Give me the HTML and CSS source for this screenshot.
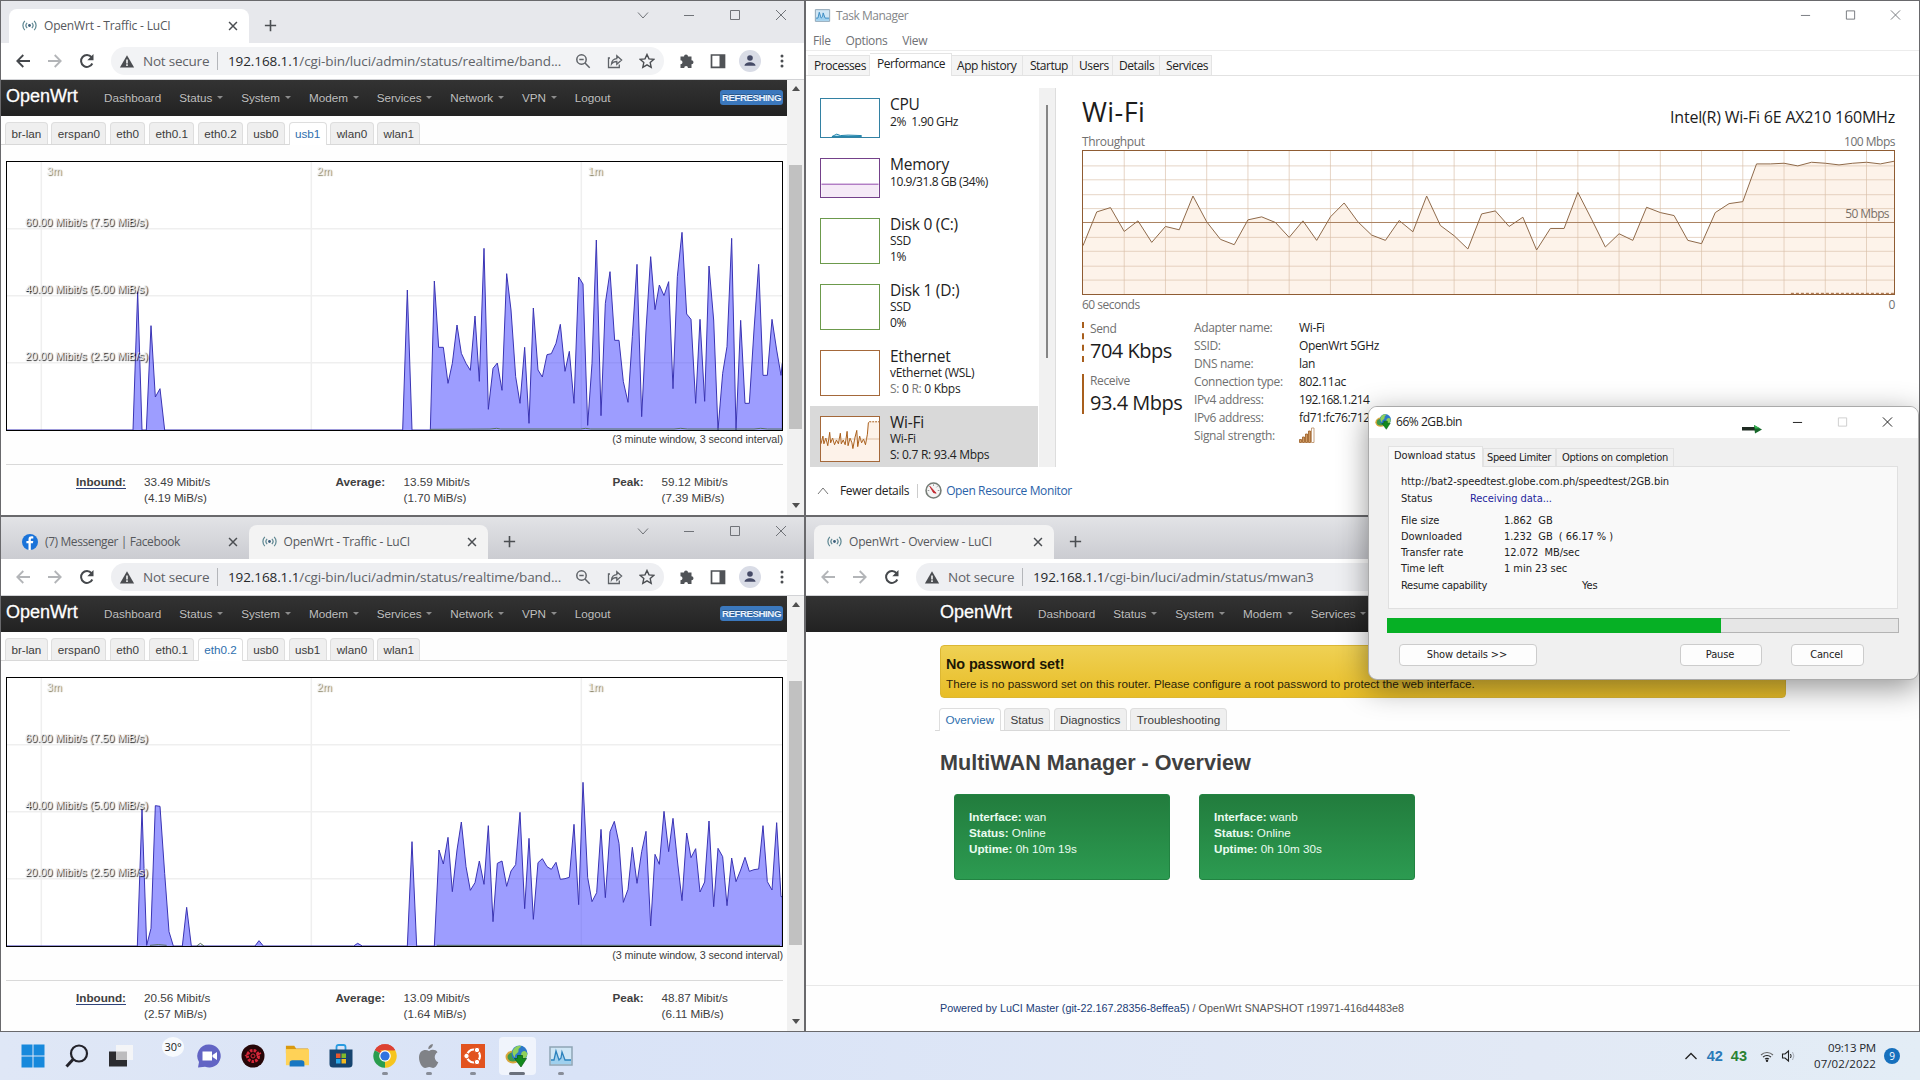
FILE: index.html
```html
<!DOCTYPE html>
<html lang="en">
<head>
<meta charset="utf-8">
<title>Desktop</title>
<link rel="stylesheet" href="styles.css">
</head>
<body>
<svg class="defs" width="0" height="0" aria-hidden="true">
  <symbol id="i-signal" viewBox="0 0 16 16"><g fill="none" stroke="#5e8792" stroke-width="1.3"><path d="M5.5 5.2a4 4 0 0 0 0 5.6M10.5 5.2a4 4 0 0 1 0 5.6M3 3a7.2 7.2 0 0 0 0 10M13 3a7.2 7.2 0 0 1 0 10"/></g><circle cx="8" cy="8" r="1.5" fill="#3c5d7a"/></symbol>
  <symbol id="i-x" viewBox="0 0 16 16"><path d="M3.5 3.5l9 9M12.5 3.5l-9 9" fill="none" stroke="currentColor" stroke-width="1.7"/></symbol>
  <symbol id="i-plus" viewBox="0 0 16 16"><path d="M8 2v12M2 8h12" fill="none" stroke="currentColor" stroke-width="1.7"/></symbol>
  <symbol id="i-back" viewBox="0 0 16 16"><path d="M15 8H2.5M8.3 2L2.3 8l6 6" fill="none" stroke="currentColor" stroke-width="1.8"/></symbol>
  <symbol id="i-fwd" viewBox="0 0 16 16"><path d="M1 8h12.500M7.700 2l6 6-6 6" fill="none" stroke="currentColor" stroke-width="1.8"/></symbol>
  <symbol id="i-reload" viewBox="0 0 16 16"><path d="M13.300 10.500A5.900 5.900 0 1 1 12.500 4.200" fill="none" stroke="currentColor" stroke-width="2"/><path d="M14.500 1v6.200H8.300z" fill="currentColor"/></symbol>
  <symbol id="i-warn" viewBox="0 0 16 16"><path d="M8 1.200L15.600 14.500H.4z" fill="#4b4d51"/><path d="M7.200 5.800h1.600v4.200H7.200zM7.200 11h1.600v1.700H7.200z" fill="#fff"/></symbol>
  <symbol id="i-zoom" viewBox="0 0 16 16"><g fill="none" stroke="#5f6368" stroke-width="1.500"><circle cx="6.500" cy="6.500" r="4.700"/><path d="M10 10l4.700 4.700M4.300 6.500h4.400"/></g></symbol>
  <symbol id="i-share" viewBox="0 0 16 16"><g fill="none" stroke="#5f6368" stroke-width="1.300"><path d="M3 5H1.500v9.500h10.800V11.500"/><path d="M4.500 11c.3-3.700 2.300-5.200 5.300-5.400V2.800l4.800 4.300-4.800 4.200V8.500c-2.200 0-4 .6-5.300 2.500z"/></g></symbol>
  <symbol id="i-star" viewBox="0 0 16 16"><path d="M8 1.500l2 4.400 4.700.5-3.500 3.200 1 4.700L8 11.900l-4.200 2.400 1-4.700L1.300 6.400 6 5.900z" fill="none" stroke="#4a4d51" stroke-width="1.400"/></symbol>
  <symbol id="i-puzzle" viewBox="0 0 16 16"><path d="M5 3.400a2 2 0 0 1 4 0h3.500v3.900a2 2 0 0 1 0 4V15H9a1.900 1.900 0 0 0-3.800 0H1.500v-3.700a2 2 0 0 0 0-4V3.400z" fill="#505357"/></symbol>
  <symbol id="i-panel" viewBox="0 0 16 16"><path d="M1.500 2h13v12.300h-13z" fill="none" stroke="#505357" stroke-width="1.700"/><path d="M9.500 2h5v12h-5z" fill="#505357"/></symbol>
  <symbol id="i-user" viewBox="0 0 22 22"><circle cx="11" cy="11" r="11" fill="#d9dce6"/><circle cx="11" cy="8" r="2.800" fill="#454a66"/><path d="M5.500 15.800c0-4.800 11-4.800 11 0z" fill="#454a66"/></symbol>
  <symbol id="i-dots" viewBox="0 0 4 16"><g fill="#4a4d51"><circle cx="2" cy="3" r="1.500"/><circle cx="2" cy="8" r="1.500"/><circle cx="2" cy="13" r="1.500"/></g></symbol>
  <symbol id="i-down" viewBox="0 0 12 12"><path d="M1 3.500l5 5.500 5-5.500" fill="none" stroke="currentColor"/></symbol>
  <symbol id="i-min" viewBox="0 0 12 12"><path d="M1 6.500h10" fill="none" stroke="currentColor"/></symbol>
  <symbol id="i-max" viewBox="0 0 12 12"><path d="M1.500 1.500h9v9h-9z" fill="none" stroke="currentColor"/></symbol>
  <symbol id="i-close" viewBox="0 0 12 12"><path d="M1 1l10 10M11 1L1 11" fill="none" stroke="currentColor"/></symbol>
  <symbol id="i-tm" viewBox="0 0 24 20"><path d="M1 1h22v18H1z" fill="#cfe6f5" stroke="#8fa5b5" stroke-width="1.500"/><path d="M2 18v-4h3l2-9 3 9 2-2 1-6 3 8h6v4z" fill="#9fd0ee"/><path d="M2 14h3l2-9 3 9 2-2 1-6 3 8h6" fill="none" stroke="#2d83bd" stroke-width="1.300"/></symbol>
  <symbol id="i-idm" viewBox="0 0 24 24"><ellipse cx="8" cy="13" rx="7.500" ry="6.500" fill="#d9a73a"/><ellipse cx="8" cy="13" rx="5.500" ry="4.500" fill="#3f9a4a"/><circle cx="14.500" cy="9.500" r="8" fill="#2c78c8"/><path d="M8 6c3-5 8-4.500 8-3.500s-3 1.500-2.500 4-4 3.500-3.500 6S6 9.500 8 6zM17 8c2-2 4-1 5 1s-1 5-3 6-4-5-2-7z" fill="#8fd15a"/><path d="M9.500 14.500h3v-3h5v3h4l-5.500 8.500z" fill="#128a1d" stroke="#075c10" stroke-width=".7"/></symbol>
</svg>

<div class="desktop">

<section class="window">
  <div class="tabstrip">
    <div class="tab active"><svg class="fav"><use href="#i-signal"/></svg><span class="tab-title">OpenWrt - Traffic - LuCI</span><svg class="tab-x"><use href="#i-x"/></svg></div>
    <svg class="plus"><use href="#i-plus"/></svg>
    <div class="winctl"><svg><use href="#i-down"/></svg><svg><use href="#i-min"/></svg><svg><use href="#i-max"/></svg><svg><use href="#i-close"/></svg></div>
  </div>
  <div class="toolbar">
    <svg class="nav-ico"><use href="#i-back"/></svg><svg class="nav-ico off"><use href="#i-fwd"/></svg><svg class="nav-ico"><use href="#i-reload"/></svg>
    <div class="omnibox"><svg class="warn"><use href="#i-warn"/></svg><span class="notsecure">Not secure</span><i class="sep"></i><span class="url"><b>192.168.1.1</b>/cgi-bin/luci/admin/status/realtime/band...</span><span class="omni-icons"><svg><use href="#i-zoom"/></svg><svg><use href="#i-share"/></svg><svg><use href="#i-star"/></svg></span></div>
    <div class="ext"><svg><use href="#i-puzzle"/></svg><svg><use href="#i-panel"/></svg><svg class="user"><use href="#i-user"/></svg><svg class="dots"><use href="#i-dots"/></svg></div>
  </div>
  <div class="viewport">
    <div class="page">
      <nav class="navbar"><span class="brand">OpenWrt</span><span class="item">Dashboard</span><span class="item drop">Status</span><span class="item drop">System</span><span class="item drop">Modem</span><span class="item drop">Services</span><span class="item drop">Network</span><span class="item drop">VPN</span><span class="item">Logout</span><span class="refresh">REFRESHING</span></nav>
      <div class="subtabs"><span>br-lan</span><span>erspan0</span><span>eth0</span><span>eth0.1</span><span>eth0.2</span><span>usb0</span><span class="on">usb1</span><span>wlan0</span><span>wlan1</span></div>
      <svg class="traffic" viewBox="21 36 2325 804" preserveAspectRatio="none">
        <path class="grid" d="M124 36V840M934 36V840M1744 36V840M21 236H2346M21 437H2346M21 638H2346"/>
        <polyline class="area" points="21,840 399,840 413,425 426,840 439,840 453,527 466,741 480,716 494,840 840,840"/>
        <polyline class="area" transform="translate(1200)" points="-360,840 8,840 22,420 36,840 91,840 103,393 116,592 130,592 144,700 157,640 171,525 184,610 198,640 211,661 225,498 238,694 252,295 265,778 279,655 292,639 306,721 320,371 333,480 347,680 360,760 374,592 387,820 400,474 414,660 427,681 441,614 454,611 468,580 481,523 495,664 508,604 522,760 536,381 549,402 563,826 576,640 589,270 603,797 616,460 630,365 644,571 657,571 670,695 684,757 697,560 711,343 725,800 738,540 752,320 765,479 778,405 792,437 806,395 819,716 832,380 846,247 860,492 873,508 887,760 900,508 914,754 927,348 941,510 954,840 968,670 981,590 995,265 1008,840 1022,511 1035,760 1048,760 1062,540 1076,343 1089,676 1102,676 1116,508 1130,600 1143,676 1147,640 1147,840"/>
        <path class="out" d="M1290 838l180-1 20-2 12 2 240 0 15-2 15 2 250 0 20-2 20 2h200l20-2 20 2h60"/>
        <g class="lbl time"><text x="140" y="75">3m</text><text x="950" y="75">2m</text><text x="1763" y="75">1m</text></g>
        <g class="lbl"><text x="76" y="228">60.00 Mibit/s (7.50 MiB/s)</text><text x="76" y="429">40.00 Mibit/s (5.00 MiB/s)</text><text x="76" y="630">20.00 Mibit/s (2.50 MiB/s)</text></g>
      </svg>
      <div class="interval">(3 minute window, 3 second interval)</div>
      <div class="stats"><b><u>Inbound:</u></b><span>33.49 Mibit/s<br>(4.19 MiB/s)</span><b>Average:</b><span>13.59 Mibit/s<br>(1.70 MiB/s)</span><b>Peak:</b><span>59.12 Mibit/s<br>(7.39 MiB/s)</span></div>
    </div>
    <div class="scrollbar"><i class="up"></i><i class="thumb"></i><i class="dn"></i></div>
  </div>
</section>

<section class="window taskmgr">
  <div class="tm-title"><svg class="tm-ico"><use href="#i-tm"/></svg><span class="name">Task Manager</span><div class="winctl"><svg><use href="#i-min"/></svg><svg><use href="#i-max"/></svg><svg><use href="#i-close"/></svg></div></div>
  <div class="tm-menu"><span>File</span><span>Options</span><span>View</span></div>
  <div class="tm-tabs"><span>Processes</span><span class="on">Performance</span><span>App history</span><span>Startup</span><span>Users</span><span>Details</span><span>Services</span></div>
  <div class="tm-body">
    <div class="tm-list">
      <div class="res s"><svg class="thumb cpu" viewBox="0 0 60 40"><path d="M11 39.500l5-2.500 4 1.500 8-.5 14 .5v1z" fill="#b7dcec" stroke="#1a7fa8" stroke-width="1"/></svg><div><h4>CPU</h4><p>2%&nbsp; 1.90 GHz</p></div></div>
      <div class="res s"><svg class="thumb mem" viewBox="0 0 60 40"><path d="M0 26.500h60V40H0z" fill="#f5eaf7"/><path d="M0 26.500h60" stroke="#8b3fa8"/></svg><div><h4>Memory</h4><p>10.9/31.8 GB (34%)</p></div></div>
      <div class="res"><svg class="thumb disk"></svg><div><h4>Disk 0 (C:)</h4><p>SSD</p><p>1%</p></div></div>
      <div class="res"><svg class="thumb disk"></svg><div><h4>Disk 1 (D:)</h4><p>SSD</p><p>0%</p></div></div>
      <div class="res"><svg class="thumb eth"></svg><div><h4>Ethernet</h4><p>vEthernet (WSL)</p><p><em>S:</em> 0 <em>R:</em> 0 Kbps</p></div></div>
      <div class="res sel"><svg class="thumb eth" viewBox="0 0 60 46" preserveAspectRatio="none"><path d="M0 28L2 20 3 28 5 22 7 30 9 16 10 27 12 22 14 29 16 24 18 28 20 17 21 28 23 24 25 29 27 15 28 30 30 22 32 27 33 33 35 22 37 14 38 31 40 20 42 27 44 23 46 29 48 18 49 6 50 5H60V46H0z" fill="#fdf2e9"/><path d="M0 28L2 20 3 28 5 22 7 30 9 16 10 27 12 22 14 29 16 24 18 28 20 17 21 28 23 24 25 29 27 15 28 30 30 22 32 27 33 33 35 22 37 14 38 31 40 20 42 27 44 23 46 29 48 18 49 6 50 5" fill="none" stroke="#a75a14"/><path d="M50 5H60" stroke="#a75a14" stroke-dasharray="2 1"/><path d="M0 23H60" stroke="#c99b72" stroke-width=".6"/></svg><div><h4>Wi-Fi</h4><p>Wi-Fi</p><p>S: 0.7 R: 93.4 Mbps</p></div></div>
    </div>
    <div class="tm-scroll"><i></i></div>
    <div class="tm-detail">
      <div class="tm-head"><h2>Wi-Fi</h2><span>Intel(R) Wi-Fi 6E AX210 160MHz</span></div>
      <div class="axis"><span>Throughput</span><span class="num">100 Mbps</span></div>
      <div class="tp">
        <svg viewBox="0 451 59 432" preserveAspectRatio="none">
          <path class="fill" d="M0 883L0 737 1 635 2 622 3 694 4 662 5 727 6 679 7 689 8 587 9 665 10 718 11 734 12 659 13 650 14 667 15 712 16 662 17 721 18 650 19 608 20 665 21 705 22 721 23 661 24 695 25 587 26 676 27 707 28 747 29 641 30 632 31 679 32 651 33 750 34 685 35 685 36 576 37 657 38 741 39 701 40 721 41 621 42 637 43 646 44 721 45 731 46 637 47 610 48 604 49 490 50 490 51 488 52 496 53 485 54 488 55 493 56 488 57 485 58 490 59 482V883z"/>
          <path class="g" d="M3 451v432M6 451v432M9 451v432M12 451v432M15 451v432M18 451v432M21 451v432M24 451v432M27 451v432M30 451v432M33 451v432M36 451v432M39 451v432M42 451v432M45 451v432M48 451v432M51 451v432M54 451v432M57 451v432M0 496H59M0 538H59M0 583H59M0 625H59M0 712H59M0 754H59M0 799H59M0 841H59"/>
          <path class="mid" d="M0 667H59"/>
          <path class="line" d="M0 737L1 635 2 622 3 694 4 662 5 727 6 679 7 689 8 587 9 665 10 718 11 734 12 659 13 650 14 667 15 712 16 662 17 721 18 650 19 608 20 665 21 705 22 721 23 661 24 695 25 587 26 676 27 707 28 747 29 641 30 632 31 679 32 651 33 750 34 685 35 685 36 576 37 657 38 741 39 701 40 721 41 621 42 637 43 646 44 721 45 731 46 637 47 610 48 604 49 490 50 490 51 488 52 496 53 485 54 488 55 493 56 488 57 485 58 490 59 482"/>
          <path class="snd" d="M51.500 881H59"/>
        </svg>
        <span class="half num">50 Mbps</span>
      </div>
      <div class="axis low"><span class="num">60 seconds</span><span>0</span></div>
      <div class="tm-stats">
        <div class="rates"><div class="rate snd"><small>Send</small><strong>704 Kbps</strong></div><div class="rate"><small>Receive</small><strong>93.4 Mbps</strong></div></div>
        <dl><dt>Adapter name:</dt><dd>Wi-Fi</dd><dt>SSID:</dt><dd>OpenWrt 5GHz</dd><dt>DNS name:</dt><dd>lan</dd><dt>Connection type:</dt><dd>802.11ac</dd><dt>IPv4 address:</dt><dd class="num">192.168.1.214</dd><dt>IPv6 address:</dt><dd>fd71:fc76:712</dd><dt>Signal strength:</dt><dd><svg class="bars" viewBox="0 0 16 16"><path d="M.5 12.500h2v3h-2zM3.500 10h2v5.500h-2zM6.500 7h2v8.500h-2zM9.500 4h2v11.500h-2z" fill="#cf9a62" stroke="#9a5a20" stroke-width=".8"/><path d="M12.500 1h2.500v14.500h-2.500z" fill="#fff" stroke="#b78a60" stroke-width=".8"/></svg></dd></dl>
      </div>
    </div>
  </div>
  <div class="tm-foot"><svg class="chev" viewBox="0 0 12 12"><path d="M1 9l5-6 5 6" fill="none" stroke="#777"/></svg><span>Fewer details</span><i></i><svg class="gauge" viewBox="0 0 16 16"><circle cx="8" cy="8" r="7" fill="#f4f4f4" stroke="#767d77" stroke-width="1.500"/><path d="M4.500 4l6 6.500-2.500-.5z" fill="#c2262d" stroke="#c2262d" stroke-width=".8"/><path d="M8 2.200v1.500M2.500 8H4M12 8h1.500M11.800 4l-1 1" stroke="#888" stroke-width=".8"/></svg><a>Open Resource Monitor</a></div>
</section>

<section class="window idle">
  <div class="tabstrip">
    <div class="tab"><svg class="fb" viewBox="0 0 16 16"><circle cx="8" cy="8" r="8" fill="#1a73d9"/><path d="M8.800 16V9.300h2.100l.4-2.300H8.800V5.600c0-.8.400-1.200 1.300-1.200h1.200V2.500C9.200 2 6.500 2.200 6.500 5.200V7H4.400v2.300h2.100V16z" fill="#fff"/></svg><span class="tab-title tight">(7) Messenger | Facebook</span><svg class="tab-x"><use href="#i-x"/></svg></div>
    <div class="tab active"><svg class="fav"><use href="#i-signal"/></svg><span class="tab-title">OpenWrt - Traffic - LuCI</span><svg class="tab-x"><use href="#i-x"/></svg></div>
    <svg class="plus"><use href="#i-plus"/></svg>
    <div class="winctl"><svg><use href="#i-down"/></svg><svg><use href="#i-min"/></svg><svg><use href="#i-max"/></svg><svg><use href="#i-close"/></svg></div>
  </div>
  <div class="toolbar">
    <svg class="nav-ico off"><use href="#i-back"/></svg><svg class="nav-ico off"><use href="#i-fwd"/></svg><svg class="nav-ico"><use href="#i-reload"/></svg>
    <div class="omnibox"><svg class="warn"><use href="#i-warn"/></svg><span class="notsecure">Not secure</span><i class="sep"></i><span class="url"><b>192.168.1.1</b>/cgi-bin/luci/admin/status/realtime/band...</span><span class="omni-icons"><svg><use href="#i-zoom"/></svg><svg><use href="#i-share"/></svg><svg><use href="#i-star"/></svg></span></div>
    <div class="ext"><svg><use href="#i-puzzle"/></svg><svg><use href="#i-panel"/></svg><svg class="user"><use href="#i-user"/></svg><svg class="dots"><use href="#i-dots"/></svg></div>
  </div>
  <div class="viewport">
    <div class="page">
      <nav class="navbar"><span class="brand">OpenWrt</span><span class="item">Dashboard</span><span class="item drop">Status</span><span class="item drop">System</span><span class="item drop">Modem</span><span class="item drop">Services</span><span class="item drop">Network</span><span class="item drop">VPN</span><span class="item">Logout</span><span class="refresh">REFRESHING</span></nav>
      <div class="subtabs"><span>br-lan</span><span>erspan0</span><span>eth0</span><span>eth0.1</span><span class="on">eth0.2</span><span>usb0</span><span>usb1</span><span>wlan0</span><span>wlan1</span></div>
      <svg class="traffic" viewBox="21 24 2325 804" preserveAspectRatio="none">
        <path class="grid" d="M124 24V828M934 24V828M1744 24V828M21 224H2346M21 425H2346M21 626H2346"/>
        <polyline class="area" points="21,828 412,828 426,418 440,826 453,775 466,407 480,409 494,610 507,785 520,828 547,828 560,712 574,828 765,828 777,812 790,828 1061,828 1073,820 1087,828"/>
        <polyline class="area" transform="translate(1200)" points="-113,828 22,828 36,515 50,828 103,828 117,540 130,582 144,502 157,665 171,540 184,456 198,590 211,661 225,638 238,573 252,643 265,467 279,755 292,580 306,573 320,649 333,603 347,584 360,427 374,716 387,505 400,748 414,578 427,566 441,590 454,598 468,577 481,628 495,626 508,622 522,463 536,704 549,337 563,622 576,695 590,668 603,478 616,683 630,485 643,454 657,520 670,697 684,658 697,532 711,640 725,545 738,484 752,768 765,553 778,583 792,424 806,545 819,445 832,570 846,692 860,489 873,563 887,536 900,666 914,636 927,453 941,710 954,535 968,560 981,707 995,564 1008,635 1022,600 1035,562 1048,604 1062,599 1076,597 1089,467 1102,635 1116,660 1130,458 1143,680 1147,680 1147,828"/>
        <path class="out" d="M450 826l25-2 25 2M590 828l11-8 11 8M1310 826h1030"/>
        <g class="lbl time"><text x="140" y="63">3m</text><text x="950" y="63">2m</text><text x="1763" y="63">1m</text></g>
        <g class="lbl"><text x="76" y="216">60.00 Mibit/s (7.50 MiB/s)</text><text x="76" y="417">40.00 Mibit/s (5.00 MiB/s)</text><text x="76" y="618">20.00 Mibit/s (2.50 MiB/s)</text></g>
      </svg>
      <div class="interval">(3 minute window, 3 second interval)</div>
      <div class="stats"><b><u>Inbound:</u></b><span>20.56 Mibit/s<br>(2.57 MiB/s)</span><b>Average:</b><span>13.09 Mibit/s<br>(1.64 MiB/s)</span><b>Peak:</b><span>48.87 Mibit/s<br>(6.11 MiB/s)</span></div>
    </div>
    <div class="scrollbar"><i class="up"></i><i class="thumb"></i><i class="dn"></i></div>
  </div>
</section>

<section class="window idle wide">
  <div class="tabstrip">
    <div class="tab active"><svg class="fav"><use href="#i-signal"/></svg><span class="tab-title">OpenWrt - Overview - LuCI</span><svg class="tab-x"><use href="#i-x"/></svg></div>
    <svg class="plus"><use href="#i-plus"/></svg>
  </div>
  <div class="toolbar">
    <svg class="nav-ico off"><use href="#i-back"/></svg><svg class="nav-ico off"><use href="#i-fwd"/></svg><svg class="nav-ico"><use href="#i-reload"/></svg>
    <div class="omnibox"><svg class="warn"><use href="#i-warn"/></svg><span class="notsecure">Not secure</span><i class="sep"></i><span class="url"><b>192.168.1.1</b>/cgi-bin/luci/admin/status/mwan3</span></div>
  </div>
  <div class="page mwan">
    <nav class="navbar"><span class="brand">OpenWrt</span><span class="item">Dashboard</span><span class="item drop">Status</span><span class="item drop">System</span><span class="item drop">Modem</span><span class="item drop">Services</span></nav>
    <div class="container">
      <div class="alert"><h4>No password set!</h4><p>There is no password set on this router. Please configure a root password to protect the web interface.</p></div>
      <div class="subtabs"><span class="on">Overview</span><span>Status</span><span>Diagnostics</span><span>Troubleshooting</span></div>
      <h2>MultiWAN Manager - Overview</h2>
      <div class="cards">
        <div class="card"><b>Interface:</b> wan<br><b>Status:</b> Online<br><b>Uptime:</b> 0h 10m 19s</div>
        <div class="card"><b>Interface:</b> wanb<br><b>Status:</b> Online<br><b>Uptime:</b> 0h 10m 30s</div>
      </div>
    </div>
    <footer><a>Powered by LuCI Master (git-22.167.28356-8effea5)</a> / OpenWrt SNAPSHOT r19971-416d4483e8</footer>
  </div>
</section>

<footer class="taskbar">
  <div class="apps">
    <span class="app"><svg viewBox="0 0 24 24"><path d="M.5.500h11v11H.5zM12.500.500h11v11h-11zM.5 12.500h11v11H.5zM12.500 12.500h11v11h-11z" fill="#1789dc"/></svg></span>
    <span class="app"><svg viewBox="0 0 24 24"><g fill="none" stroke="#23232b"><circle cx="14" cy="9.500" r="8" stroke-width="2.200"/><path d="M8 15.500L1.500 22.500" stroke-width="3"/></g></svg></span>
    <span class="app"><svg viewBox="0 0 24 24"><path d="M0 7.500h18v15H0z" fill="#2b2b2f"/><path d="M7 1h17v15H7z" fill="#f4f5f7"/><path d="M7 7.500h11V16H7z" fill="#bcbcbe"/></svg></span>
    <span class="app weather"><span>30°</span></span>
    <span class="app"><svg viewBox="0 0 24 24"><path d="M12 .5a11.500 11.500 0 1 1-4 22.200L1 23.500l1-5.500A11.500 11.500 0 0 1 12 .5z" fill="#6264c4"/><path d="M5.500 7.500h9.500v9H5.500zM15.500 11l4.500-3v8l-4.500-3z" fill="#fff"/></svg></span>
    <span class="app"><svg viewBox="0 0 24 24"><circle cx="12" cy="12" r="11.500" fill="#260608"/><g fill="none" stroke="#d5273a"><circle cx="12" cy="12" r="5.500" stroke-width="3" stroke-dasharray="2.500 1.200"/><circle cx="12" cy="12" r="2" stroke-width="1"/><path d="M4 12l3-2M20 9l-4 2 2 4" stroke-width="1.500"/></g></svg></span>
    <span class="app"><svg viewBox="0 0 26 24"><path d="M1 1h9l2 3h13v5H1z" fill="#d9990f"/><path d="M1 4.500h25V22H1z" fill="#ffd257"/><path d="M5 23.500v-4a3 3 0 0 1 3-3h10a3 3 0 0 1 3 3v4z" fill="#1877c2"/></svg></span>
    <span class="app"><svg viewBox="0 0 24 24"><path d="M7.500 6V3q0-2 2-2h5q2 0 2 2v3" fill="none" stroke="#2a9be0" stroke-width="1.800"/><path d="M.5 5.500h23V20q0 3.500-3.500 3.500H4Q.5 23.500.5 20z" fill="#16446f"/><path d="M7 9.500h4.500V14H7z" fill="#e8572e"/><path d="M12.500 9.500H17V14h-4.500z" fill="#7fba2c"/><path d="M7 15h4.500v4.500H7z" fill="#2aa6e6"/><path d="M12.500 15H17v4.500h-4.500z" fill="#f3b91f"/></svg></span>
    <span class="app run"><svg viewBox="0 0 24 24"><path d="M12 12L1.800 6.200A11.700 11.700 0 0 1 22.200 6.200z" fill="#dd4132"/><path d="M12 12L22.200 6.200A11.700 11.700 0 0 1 12 23.700z" fill="#f6c51f"/><path d="M12 12V23.700A11.700 11.700 0 0 1 1.800 6.200z" fill="#2a9d4e"/><path d="M7 6.300h15.200L17 15z" fill="#f6c51f"/><path d="M1.800 6.200H22.200A11.700 11.700 0 0 0 1.800 6.200z" fill="#dd4132"/><circle cx="12" cy="12" r="5.800" fill="#fff"/><circle cx="12" cy="12" r="4.600" fill="#2f72e0"/></svg></span>
    <span class="app run"><svg viewBox="0 0 24 24"><path d="M15.800 0c.3 2.600-2 5-4.400 5C11 2.500 13.400.200 15.800 0zM20.500 8.200c-4 2.600-3.500 8.200.8 10C20 21.500 18 24 16.200 24c-1.700 0-2.200-1-4-1s-2.400 1-4 1C5 24 2 18.500 2 13.500 2 6 8.500 4.500 12 7c3-2 6.800-1.500 8.500 1.200z" fill="#808287"/></svg></span>
    <span class="app run"><svg viewBox="0 0 24 24"><path d="M0 0h24v24H0z" fill="#e2531f"/><circle cx="12.500" cy="12" r="6.500" fill="none" stroke="#fff" stroke-width="2.200"/><g fill="#fff" stroke="#e2531f" stroke-width="1"><circle cx="5.500" cy="12" r="2.700"/><circle cx="16" cy="6" r="2.700"/><circle cx="16" cy="18" r="2.700"/></g></svg></span>
    <span class="app run cur"><svg><use href="#i-idm"/></svg></span>
    <span class="app run"><svg><use href="#i-tm"/></svg></span>
  </div>
  <div class="tray">
    <svg class="t-chev" viewBox="0 0 12 12"><path d="M.5 9L6 3.500 11.500 9" fill="none" stroke="#222" stroke-width="1.300"/></svg>
    <b class="t42">42</b><b class="t43">43</b>
    <svg class="t-wifi" viewBox="0 0 14 14"><g fill="none" stroke="#222" stroke-width="1.100"><path d="M1 6a8.500 8.500 0 0 1 12 0" stroke="#666"/><path d="M3 8.200a5.700 5.700 0 0 1 8 0M5 10.200a3 3 0 0 1 4 0"/></g><circle cx="7" cy="11.800" r="1.200" fill="#222"/></svg>
    <svg class="t-vol" viewBox="0 0 14 14"><path d="M1 5h2.500L7 2v10L3.500 9H1z" fill="none" stroke="#222" stroke-width="1.100"/><path d="M9 5q1.300 2 0 4" fill="none" stroke="#222"/><path d="M11 3q2.800 4 0 8" fill="none" stroke="#a9afba"/></svg>
    <div class="clock"><span>09:13 PM</span><span class="date">07/02/2022</span></div>
    <span class="bell">9</span>
  </div>
</footer>

<section class="idm">
  <div class="idm-title"><svg class="idm-ico"><use href="#i-idm"/></svg><span class="name">66% 2GB.bin</span>
    <svg class="arrow" viewBox="0 0 20 10"><path d="M0 3h13v3.500H0z" fill="#1f2b22"/><path d="M12 1l8 4.500-7 4z" fill="#17682a"/><path d="M12 1l6 3.200-5 .3z" fill="#35b552"/></svg>
    <div class="winctl"><svg><use href="#i-min"/></svg><svg class="dim"><use href="#i-max"/></svg><svg><use href="#i-close"/></svg></div></div>
  <div class="idm-tabs"><span class="on">Download status</span><span>Speed Limiter</span><span>Options on completion</span></div>
  <div class="idm-panel">
    <p>http://bat2-speedtest.globe.com.ph/speedtest/2GB.bin</p>
    <p class="st"><span>Status</span><a>Receiving data...</a></p>
    <p class="kv"><span>File size</span><span>1.862&nbsp; GB</span></p>
    <p class="kv"><span>Downloaded</span><span>1.232&nbsp; GB&nbsp; ( 66.17 % )</span></p>
    <p class="kv"><span>Transfer rate</span><span>12.072&nbsp; MB/sec</span></p>
    <p class="kv"><span>Time left</span><span>1 min 23 sec</span></p>
    <p class="rc"><span>Resume capability</span><span>Yes</span></p>
  </div>
  <div class="bar"><i></i></div>
  <div class="btns"><button class="b1">Show details &gt;&gt;</button><button class="b2">Pause</button><button class="b3">Cancel</button></div>
</section>
</div>
</body>
</html>
```
FILE: styles.css
```css
* { box-sizing: border-box; }
body { margin: 0; width: 1920px; height: 1080px; overflow: hidden; background: #dfe7f5; font-family: "Open Sans", "Noto Sans", sans-serif; }
h2, h4, p, dl, dd, dt { margin: 0; }
svg { display: block; flex: none; }
.defs { position: absolute; }
.desktop { position: relative; display: grid; grid-template-columns: 805px 1115px; grid-template-rows: 516px 516px 48px; height: 1080px; }
.window { display: flex; flex-direction: column; overflow: hidden; background: #fefefe; border: 1px solid #69696c; }

/* browser chrome */
.tabstrip { display: flex; flex: none; align-items: flex-start; height: 42px; padding: 8px 0 0 8px; background: #e7e8ec; color: #4b4e52; }
.tab { display: flex; align-items: center; width: 239.500px; height: 34px; padding: 0 9px 1px 13px; border-radius: 8px 8px 0 0; }
.tab.active { background: #fff; }
.fav { width: 15px; height: 15px; }
.fb { width: 16px; height: 16px; }
.tab-title { margin-left: 7px; font-size: 12px; letter-spacing: -.18px; white-space: nowrap; color: #55585c; }
.tab-title.tight { letter-spacing: -.4px; }
.tab-x { width: 14px; height: 14px; margin-left: auto; }
.plus { width: 15px; height: 15px; margin: 9px 0 0 14px; }
.winctl { display: flex; gap: 34px; margin: 0 17px 0 auto; color: #707378; }
.winctl svg { width: 12px; height: 12px; }
.idle .tabstrip { background: linear-gradient(#e2e3e6, #cbccd1); }
.idle .tab.active { background: #f3f3f3; }
.toolbar { display: flex; flex: none; align-items: center; height: 37px; padding-left: 14px; background: #fff; border-bottom: 1px solid #d2d3d6; color: #45484c; }
.nav-ico { width: 16px; height: 16px; margin-right: 16px; }
.nav-ico.off { color: #b3b5b8; }
.omnibox { display: flex; align-items: center; width: 553px; height: 28px; padding-left: 8px; border-radius: 14px; background: #f2f3f5; }
.idle .omnibox { background: #eeeff2; }
.warn { width: 16px; height: 15px; }
.notsecure { width: 74px; margin-left: 8px; font-size: 13.500px; letter-spacing: -.22px; color: #5f6267; white-space: nowrap; }
.sep { width: 1px; height: 18px; margin-right: 10px; background: #b4b6ba; }
.url { font-size: 13.500px; letter-spacing: -.1px; color: #606368; white-space: nowrap; }
.url b { font-weight: 400; color: #26282b; }
.omni-icons { display: flex; gap: 16px; margin: 0 9px 0 auto; }
.omni-icons svg { width: 16px; height: 16px; }
.ext { display: flex; align-items: center; gap: 15px; margin-left: 15px; }
.ext svg { width: 16px; height: 16px; }
.ext .user { width: 22px; height: 22px; margin: 0 -2px 0 -2px; }
.ext .dots { width: 4px; margin-left: 6px; }

/* router pages */
.viewport { display: flex; flex: 1; }
.page { width: 786px; font: 11.7px/16px "Liberation Sans", Arial, sans-serif; color: #404040; background: #fefefe; }
.navbar { display: flex; align-items: center; height: 36px; padding: 0 4px 1px 5px; background: linear-gradient(#333, #222); color: #bfbfbf; text-shadow: 0 -1px 0 rgba(0,0,0,.3); }
.brand { width: 89px; margin-top: -4px; font-size: 18px; color: #fff; -webkit-text-stroke: .3px #fff; }
.item { padding: 0 9px; }
.drop::after { content: ""; display: inline-block; margin-left: 4.800px; vertical-align: 3px; border: 3.6px solid transparent; border-bottom: 0; border-top-color: #8c8c8c; }
.refresh { margin-left: auto; padding: 0 2px; height: 15px; border-radius: 3px; background: #3b78bd; color: #e9f2fd; font-weight: 700; font-size: 9.7px; letter-spacing: -.45px; line-height: 15px; }
.subtabs { display: flex; gap: 3.6px; height: 29px; padding: 6px 0 0 4px; border-bottom: 1px solid #d8d8d8; color: #3c3c3c; }
.subtabs span { height: 22px; padding: 0 5.4px; line-height: 22px; border: 1px solid #dedede; border-bottom: 0; border-radius: 4px 4px 0 0; background: #efefef; }
.subtabs .on { height: 23px; background: #fff; color: #2f6fae; }
.traffic { width: 777px; height: 270px; margin: 16px 0 0 5px; border: 1px solid #000; background: #fff; overflow: hidden; }
.traffic path, .traffic polyline { vector-effect: non-scaling-stroke; }
.grid { fill: none; stroke: #efefef; stroke-width: 1.500; }
.area { fill: rgba(60,60,255,.5); stroke: #3a34b4; stroke-width: 1; }
.out { fill: none; stroke: #55705c; stroke-width: 1; }
.lbl { font: 32.4px "Liberation Sans", Arial, sans-serif; fill: #eee; text-shadow: 1px 1px 1px #000; }
.lbl.time { text-shadow: 1px 1px 1px #77704e; }
.interval { height: 33px; padding-right: 4px; text-align: right; font-size: 10.8px; letter-spacing: -.11px; }
.stats { display: grid; grid-template-columns: 68px 191.500px 68px 209px 49px 1fr; width: 777px; margin-left: 5px; padding: 9px 0 0 70px; border-top: 1px solid #d9d9d9; }
.stats u { display: inline-block; height: 15px; text-decoration: none; border-bottom: 1.500px solid #2f4379; }
.scrollbar { display: flex; flex-direction: column; align-items: center; width: 17px; background: #f1f1f1; }
.scrollbar .up { margin-top: 6px; border: 4px solid transparent; border-top: 0; border-bottom: 5px solid #505050; }
.scrollbar .thumb { width: 13px; height: 264px; margin-top: 74px; background: #c1c1c1; }
.scrollbar .dn { margin-top: 74px; border: 4px solid transparent; border-bottom: 0; border-top: 5px solid #505050; }

/* mwan page */
.wide .tab { width: 240px; }
.wide .tab-title { letter-spacing: -.2px; }
.wide .omnibox { width: 900px; }
.mwan { display: flex; flex-direction: column; flex: 1; width: 100%; }
.mwan .navbar { padding-left: 134px; flex: none; }
.container { padding: 13px 0 0 134px; }
.alert { width: 846px; height: 53px; padding: 8px 5px; border-radius: 4px; background: linear-gradient(#efd154, #e8bd27); border: 1px solid #dcb734; color: #2a2308; }
.alert h4 { font-size: 14.400px; line-height: 20px; letter-spacing: -.1px; margin-bottom: 2px; color: #1c1705; }
.container .subtabs { width: 855px; margin-left: -5px; margin-top: 4px; padding-left: 4px; }
.container h2 { margin-top: 20px; font-size: 21.600px; line-height: 24px; }
.cards { display: flex; gap: 29px; margin: 19px 0 0 14px; }
.card { width: 216px; height: 86px; padding: 14px; border-radius: 3px; background: linear-gradient(#227c3d, #2c9b51); color: #eafbf0; border: 1px solid #228342; line-height: 16px; }
.mwan footer { margin-top: auto; height: 46px; padding: 14px 0 0 134px; border-top: 1px solid #e8e8e8; font-size: 10.800px; color: #555; }
.mwan footer a { color: #203c77; }

/* task manager */
.taskmgr { background: #fff; font-size: 12px; letter-spacing: -.36px; }
.tm-title { display: flex; align-items: flex-start; height: 31px; padding: 8px 0 0 8px; color: #85878a; }
.tm-title .name { margin: -2px 0 0 5px; line-height: 18px; letter-spacing: -.5px; }
.tm-ico { width: 17px; height: 13px; }
.tm-title .winctl { margin-right: 18px; }
.taskmgr .winctl svg { width: 11px; height: 12px; }
.tm-menu { display: flex; gap: 15px; height: 19px; padding-left: 7px; line-height: 18px; color: #6f7175; border-bottom: 1px solid #ececec; }
.tm-tabs { display: flex; align-items: flex-end; height: 25px; padding-left: 2px; line-height: 19px; border-bottom: 1px solid #e2e2e2; color: #222; white-space: nowrap; letter-spacing: -.42px; }
.tm-tabs span { height: 20px; padding-left: 6px; border: 1px solid #e4e4e4; border-left-width: 0; border-bottom: 0; background: #f4f4f4; }
.tm-tabs .on { height: 23px; margin-bottom: -1px; padding-left: 7px; background: #fff; line-height: 20px; }
.tm-tabs span:nth-child(1) { width: 62px; } .tm-tabs span:nth-child(2) { width: 82px; } .tm-tabs span:nth-child(3) { width: 71px; padding-left: 5px; }
.tm-tabs span:nth-child(4) { width: 50px; padding-left: 7px; letter-spacing: -.5px; } .tm-tabs span:nth-child(5) { width: 40px; } .tm-tabs span:nth-child(6) { width: 47px; } .tm-tabs span:nth-child(7) { width: 52px; }
.tm-body { display: flex; height: 392px; padding: 12px 0 0 4px; }
.tm-list { width: 228px; }
.res { display: flex; height: 66px; padding: 10px 0 0 10px; }
.res.s { height: 60px; }
.res.sel { height: 61px; background: #d9d9d9; }
.res .thumb { width: 60px; height: 46px; margin-right: 10px; border: 1px solid; background: #fff; }
.res.s .thumb { height: 40px; }
.thumb.cpu { color: #3381a3; } .thumb.mem { color: #74418a; } .thumb.disk { color: #6c9a4c; } .thumb.eth { color: #a4683a; }
.res h4 { margin-top: -1px; font-weight: 400; font-size: 15.500px; line-height: 14px; letter-spacing: -.25px; color: #222; }
.res p { line-height: 16px; white-space: nowrap; color: #222; letter-spacing: -.28px; }
.res h4 + p { margin-top: 2px; }
.res.s h4 + p { margin-top: 3px; letter-spacing: -.42px; }
.res em { font-style: normal; color: #777; }
.tm-scroll { width: 17px; height: 379px; margin-left: 1px; padding: 17px 0 0 7px; background: #f1f1f1; border-right: 1px solid #ddd; }
.tm-scroll i { display: block; width: 2px; height: 253px; background: #858585; }
.tm-detail { width: 813px; margin-left: 26px; }
.tm-head { display: flex; justify-content: space-between; height: 45px; padding-top: 7px; color: #1c1c1c; }
.tm-head h2 { font-weight: 400; font-size: 27px; line-height: 34px; letter-spacing: .4px; }
.tm-head span { padding-top: 10px; font-size: 16px; line-height: 24px; letter-spacing: -.21px; }
.axis { display: flex; justify-content: space-between; height: 17px; line-height: 17px; color: #707070; }
.taskmgr .num { letter-spacing: -.6px; }
.axis .num { letter-spacing: -.5px; }
.axis.low { line-height: 19px; }
.tp { position: relative; width: 813px; height: 145px; border: 1px solid #8f5c33; background: #fff; }
.tp svg { width: 811px; height: 143px; }
.tp path { vector-effect: non-scaling-stroke; fill: none; stroke-width: 1; }
.tp .fill { fill: #fdf3ea; }
.tp .g { stroke: #d9bfa8; stroke-opacity: .65; }
.tp .mid { stroke: #ab8262; }
.tp .line { stroke: #8f6a4a; }
.tp .snd { stroke: #a4683a; stroke-dasharray: 3 2; }
.half { position: absolute; right: 5px; top: 54px; line-height: 18px; color: #7a7068; }
.tm-stats { display: flex; padding-top: 7px; }
.rates { width: 112px; }
.rate { height: 40px; margin: 3px 0 12px; padding-left: 6px; border-left: 2px solid #a85f1d; white-space: nowrap; }
.rate.snd { border-left-style: dashed; }
.rate small { display: block; font-size: 12px; line-height: 13px; color: #707070; }
.rate strong { display: block; font-weight: 400; font-size: 20px; line-height: 32px; letter-spacing: -.5px; color: #1c1c1c; }
.tm-stats dl { display: grid; grid-template-columns: 105px auto; grid-auto-rows: 18px; line-height: 18px; color: #1c1c1c; white-space: nowrap; }
.tm-stats dt { color: #707070; }
.bars { width: 16px; height: 16px; }
.tm-foot { display: flex; align-items: center; height: 44px; padding: 1px 0 0 11px; color: #222; }
.chev { width: 12px; height: 12px; margin-right: 11px; }
.tm-foot i { width: 1px; height: 14px; margin: 0 7px 0 8px; background: #ccc; }
.gauge { width: 17px; height: 17px; margin-right: 4px; }
.tm-foot a { color: #2a62a8; letter-spacing: -.38px; }

/* download dialog */
.idm { position: absolute; left: 1368px; top: 406px; width: 551px; height: 274px; border: 1px solid #aaa; border-radius: 9px; background: #f0f0f0; box-shadow: 0 8px 30px rgba(0,0,0,.42); font: 11px/14px "DejaVu Sans Condensed", "DejaVu Sans", sans-serif; letter-spacing: -.1px; color: #222; }
.idm-title { display: flex; align-items: center; height: 31px; padding: 0 0 2px 6px; background: #fff; border-radius: 8px 8px 0 0; font-family: "Open Sans", sans-serif; font-size: 12px; letter-spacing: -.45px; }
.idm-ico { width: 17px; height: 17px; margin-right: 4px; }
.arrow { width: 20px; height: 10px; margin: 14px 0 0 auto; }
.idm .winctl { margin: 0 25px 0 30px; gap: 34px; color: #111; }
.idm .winctl svg { width: 11px; height: 12px; }
.idm .winctl .dim { color: #ccc; }
.idm-tabs { display: flex; align-items: flex-end; height: 28px; padding-left: 19px; }
.idm-tabs span { height: 18px; padding: 0 0 0 3px; line-height: 17px; border: 1px solid #e2e2e2; border-bottom: 0; white-space: nowrap; }
.idm-tabs .on { width: 95px; height: 21px; padding-left: 5px; margin-bottom: -1px; background: #f9f9f9; line-height: 18px; }
.idm-tabs span:nth-child(2) { width: 73px; letter-spacing: -.38px; } .idm-tabs span:nth-child(3) { width: 118px; padding-left: 5px; letter-spacing: -.29px; }
.idm-panel { width: 510px; height: 143px; margin-left: 19px; padding: 7px 0 0 12px; background: #f9f9f9; border: 1px solid #e0e0e0; letter-spacing: -.05px; }
.idm-panel p { display: flex; height: 16px; line-height: 16px; white-space: nowrap; }
.idm-panel .st { margin: 1px 0 6px; } .st span { width: 69px; } .st a { color: #1f1f9e; }
.kv span:first-child { width: 103px; }
.idm-panel .rc { margin-top: 1px; } .rc span:first-child { width: 181px; letter-spacing: -.29px; }
.bar { width: 512px; height: 15px; margin: 9px 0 0 18px; border: 1px solid #b4b4b4; background: #e6e6e6; }
.bar i { display: block; width: 334px; height: 15px; margin: -1px; background: #06b025; }
.btns { display: flex; padding: 11px 0 0 30px; }
.btns button { height: 22px; padding: 0 2px 0 0; border: 1px solid #ccc; border-radius: 4px; background: #fdfdfd; font: inherit; letter-spacing: -.15px; color: #222; }
.b1 { width: 138px; margin-right: 143px; } .b2 { width: 82px; margin-right: 29px; } .b3 { width: 73px; }

/* taskbar */
.taskbar { grid-column: 1 / 3; display: flex; justify-content: space-between; align-items: center; background: linear-gradient(90deg, #dfe7f6, #d9e3f7 30%, #e2e9f5 80%, #e3edf6); }
.apps { display: flex; padding-left: 11px; }
.app { position: relative; display: flex; justify-content: center; align-items: center; width: 44.020px; height: 38px; }
.app svg { width: 24px; height: 24px; }
.weather span { margin: -18px 0 0 16px; width: 22px; height: 20px; border-radius: 50%; background: #f7fafd; font-size: 11px; line-height: 20px; text-align: center; white-space: nowrap; color: #222; }
.run::after { content: ""; position: absolute; left: 19px; bottom: 0; width: 6px; height: 3px; border-radius: 2px; background: #888d98; }
.cur::before { content: ""; position: absolute; left: 4px; top: 0; width: 37px; height: 38px; border-radius: 4px; background: rgba(255,255,255,.6); }
.cur svg { position: relative; }
.cur::after { left: 14px; width: 16px; background: #6b717c; }
.tray { display: flex; align-items: center; padding-right: 20px; color: #24262a; }
.t-chev { width: 12px; height: 12px; margin-right: 10px; }
.tray b { font-size: 14.500px; line-height: 16px; font-family: "Liberation Sans", Arial, sans-serif; }
.t42 { margin-right: 8px; color: #2a7ab8; } .t43 { margin-right: 13px; color: #2a8232; }
.t-wifi { width: 14px; height: 14px; margin-right: 7px; } .t-vol { width: 15px; height: 14px; margin-right: 18px; }
.clock { display: flex; flex-direction: column; align-items: flex-end; width: 63px; padding-right: 1px; font-size: 11.500px; line-height: 16px; letter-spacing: -.2px; white-space: nowrap; }
.clock .date { letter-spacing: .1px; }
.bell { width: 16px; height: 16px; margin-left: 7px; border-radius: 50%; background: #1670bd; color: #fff; font-size: 10px; line-height: 16px; text-align: center; }
```
